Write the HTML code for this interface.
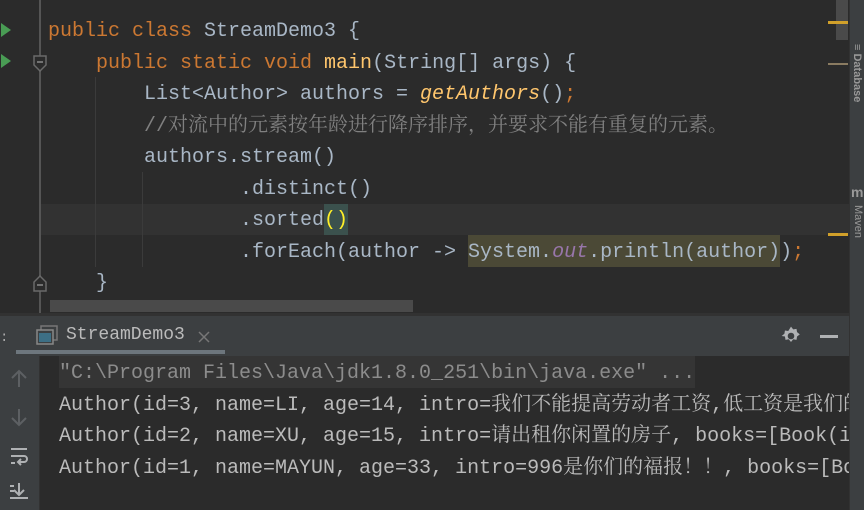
<!DOCTYPE html>
<html><head><meta charset="utf-8"><style>
body{margin:0;width:864px;height:510px;overflow:hidden;background:#2b2b2b;position:relative;font-family:"Liberation Mono",monospace;}
.abs{position:absolute}
.ln{position:absolute;left:0;height:31px;line-height:31px;font-size:20px;color:#a9b7c6;white-space:pre;}
.k{color:#cc7832}.m{color:#ffc66d}.i{font-style:italic}.c{color:#808080;font-family:"Liberation Mono","Noto Serif CJK SC",monospace}
.p{color:#9876aa;font-style:italic}
.cl{position:absolute;left:59px;height:31px;line-height:31px;font-size:20px;color:#bbbbbb;white-space:pre;font-family:"Liberation Mono","Noto Serif CJK SC",monospace}
</style></head><body>
<div class="abs" style="left:39px;top:0;width:2px;height:313px;background:#555"></div>
<div class="abs" style="left:41px;top:204px;width:808px;height:31px;background:#323232"></div>
<div class="abs" style="left:95px;top:77px;width:1px;height:190px;background:#3b3b3b"></div>
<div class="abs" style="left:142px;top:172px;width:1px;height:95px;background:#3b3b3b"></div>
<svg class="abs" style="left:0;top:20px" width="12" height="60"><polygon points="1,3 11,10 1,17" fill="#499c54"/><polygon points="1,34 11,41 1,48" fill="#499c54"/></svg>
<svg class="abs" style="left:32px;top:54px" width="16" height="20"><path d="M2,2H14V11L8,17L2,11Z" fill="#2b2b2b" stroke="#6a6a6a" stroke-width="1.5"/><path d="M5,8H11" stroke="#8a8a8a" stroke-width="1.5"/></svg>
<svg class="abs" style="left:32px;top:273px" width="16" height="20"><path d="M2,18H14V9L8,3L2,9Z" fill="#2b2b2b" stroke="#6a6a6a" stroke-width="1.5"/><path d="M5,12H11" stroke="#8a8a8a" stroke-width="1.5"/></svg>
<div class="abs" style="left:468px;top:235px;width:312px;height:32px;background:#4b4936"></div>
<div class="abs" style="left:324px;top:204px;width:24px;height:31px;background:#3b514d"></div>
<div class="ln" style="top:16px;left:48px"><span class="k">public class </span>StreamDemo3 {</div>
<div class="ln" style="top:48px;left:96px"><span class="k">public static void </span><span class="m">main</span>(String[] args) {</div>
<div class="ln" style="top:79px;left:144px">List&lt;Author&gt; authors = <span class="m i">getAuthors</span>()<span class="k">;</span></div>
<div class="ln c" style="top:111px;left:144px">//对流中的元素按年龄进行降序排序，并要求不能有重复的元素。</div>
<div class="ln" style="top:142px;left:144px">authors.stream()</div>
<div class="ln" style="top:174px;left:240px">.distinct()</div>
<div class="ln" style="top:205px;left:240px">.sorted<span style="color:#ffef28">()</span></div>
<div class="ln" style="top:237px;left:240px">.forEach(author -&gt; System.<span class="p">out</span>.println(author))<span class="k">;</span></div>
<div class="ln" style="top:268px;left:96px">}</div>
<div class="abs" style="left:50px;top:300px;width:363px;height:12px;background:#4a4a4a"></div>
<div class="abs" style="left:836px;top:0;width:12px;height:40px;background:#4a4a4a"></div>
<div class="abs" style="left:828px;top:21px;width:20px;height:3px;background:#d1a02a"></div>
<div class="abs" style="left:828px;top:63px;width:20px;height:2px;background:#8a7b61"></div>
<div class="abs" style="left:828px;top:233px;width:20px;height:3px;background:#d1a02a"></div>
<div class="abs" style="left:849px;top:0;width:15px;height:510px;background:#3c3f41;border-left:1px solid #323232"></div>
<div class="abs" style="left:851px;top:44px;font:bold 11px 'Liberation Sans';color:#999;writing-mode:vertical-rl">≡ Database</div>
<div class="abs" style="left:851px;top:184px;font:bold 14px 'Liberation Sans';color:#999">m</div>
<div class="abs" style="left:852px;top:205px;font:11px 'Liberation Sans';color:#999;writing-mode:vertical-rl">Maven</div>
<div class="abs" style="left:0;top:313px;width:849px;height:3px;background:#323232"></div>
<div class="abs" style="left:0;top:316px;width:849px;height:40px;background:#3c3f41"></div>
<div class="abs" style="left:0;top:330px;color:#aaa;font-size:14px">:</div>
<svg class="abs" style="left:36px;top:325px" width="24" height="24"><rect x="5" y="1" width="16" height="14" fill="none" stroke="#777" stroke-width="1.5"/><rect x="1" y="5" width="16" height="14" fill="#3c3f41" stroke="#888" stroke-width="1.5"/><rect x="3" y="8" width="12" height="9" fill="#3d6f85"/></svg>
<div class="abs" style="left:66px;top:325px;font-size:18px;color:#bbb">StreamDemo3</div>
<svg class="abs" style="left:197px;top:330px" width="14" height="14"><path d="M2,2L12,12M12,2L2,12" stroke="#777" stroke-width="1.5"/></svg>
<div class="abs" style="left:16px;top:350px;width:209px;height:4px;background:#6d767d"></div>
<svg class="abs" style="left:780px;top:325px" width="22" height="22" viewBox="0 0 20 20"><path d="M10,1.5l2,2.5 3-.5.5 3 2.5 2-2.5 2-.5 3-3-.5-2 2.5-2-2.5-3 .5-.5-3L1.5,10 4 8l.5-3 3 .5Z" fill="#afb1b3"/><circle cx="10" cy="10" r="3" fill="#3c3f41"/></svg>
<div class="abs" style="left:820px;top:335px;width:18px;height:3px;background:#afb1b3"></div>
<div class="abs" style="left:0;top:356px;width:39px;height:154px;background:#3c3f41;border-right:1px solid #323232"></div>
<svg class="abs" style="left:8px;top:368px" width="22" height="140"><path d="M11,3V19M4,10L11,3L18,10" fill="none" stroke="#5d6063" stroke-width="2"/><path d="M11,41V57M4,50L11,57L18,50" fill="none" stroke="#5d6063" stroke-width="2"/><path d="M3,81H19M3,88H16a3,3 0 0 1 0,6H11M13,91L10,94L13,97M3,95H7" fill="none" stroke="#afb1b3" stroke-width="2"/><path d="M11,115V127M6,122L11,127L16,122M2,118H6M2,123H6M2,130H20" fill="none" stroke="#afb1b3" stroke-width="2"/></svg>
<div class="abs" style="left:59px;top:356px;width:636px;height:32px;background:#353535"></div>
<div class="cl" style="top:358px;color:#8c8c8c">"C:\Program Files\Java\jdk1.8.0_251\bin\java.exe" ...</div>
<div class="abs" style="left:40px;top:388px;width:809px;height:122px;overflow:hidden">
<div class="cl" style="top:2px;left:19px">Author(id=3, name=LI, age=14, intro=我们不能提高劳动者工资,低工资是我们的优势</div>
<div class="cl" style="top:33px;left:19px">Author(id=2, name=XU, age=15, intro=请出租你闲置的房子, books=[Book(id=3</div>
<div class="cl" style="top:65px;left:19px">Author(id=1, name=MAYUN, age=33, intro=996是你们的福报！！, books=[Book(id=1</div>
</div>
</body></html>
